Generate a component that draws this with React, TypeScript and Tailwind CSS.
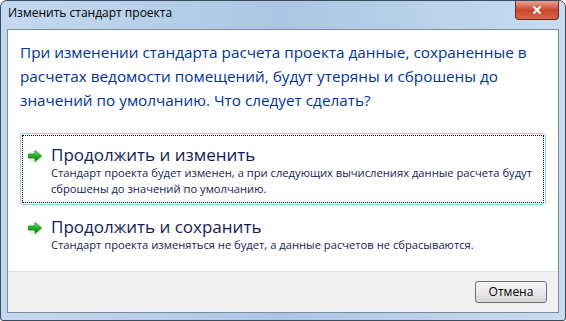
import { X } from "lucide-react"

function GreenArrow() {
  return (
    <svg width="16" height="16" viewBox="0 0 16 16" className="shrink-0">
      <defs>
        <linearGradient id="ga" x1="0" y1="0" x2="0" y2="1">
          <stop offset="0" stopColor="#8be986" />
          <stop offset="0.5" stopColor="#22b11f" />
          <stop offset="1" stopColor="#0b7d12" />
        </linearGradient>
      </defs>
      <ellipse cx="8" cy="8.5" rx="7.5" ry="6" fill="#0a6a10" opacity="0.1" />
      <path d="M1.5 6h6.5V2.5l6.5 5.5-6.5 5.5V10H1.5z" fill="url(#ga)" stroke="#137a1b" strokeWidth="0.7" strokeLinejoin="round" />
    </svg>
  )
}

function Option({ title, text, focused }: { title: string; text: string; focused?: boolean }) {
  return (
    <div
      className={
        focused
          ? "rounded-[3px] border border-[#8fd8f0] p-px"
          : "rounded-[3px] border border-transparent p-px"
      }
    >
      <div
        className={
          focused
            ? "flex gap-[8px] border border-dotted border-black pl-[4px] pr-2 pt-[9px] pb-[5px]"
            : "flex gap-[8px] border border-dotted border-transparent pl-[4px] pr-2 pt-[9px] pb-[5px]"
        }
      >
        <div className="pt-[3px]">
          <GreenArrow />
        </div>
        <div>
          <div className="text-[17px] leading-[20px] text-[#151c55]">{title}</div>
          <div className="text-[11.2px] leading-[16px] text-[#151c55]">{text}</div>
        </div>
      </div>
    </div>
  )
}

export default function App() {
  return (
    <div
      className="flex h-[321px] w-[566px] flex-col overflow-hidden rounded-t-[7px] rounded-b-[3px] border border-[#3b4a5c] bg-gradient-to-r from-[#c4d9ef] via-[#aac6e4] to-[#c8dcf0]"
      style={{ fontFamily: '"Open Sans", "Noto Sans", sans-serif' }}
    >
      <div className="flex h-[28px] shrink-0 items-start justify-between">
        <div className="pl-[7px] pt-[4px] text-[12px] leading-[16px] text-black">Изменить стандарт проекта</div>
        <div className="mr-[6px] flex h-[19px] w-[44px] items-center justify-center rounded-b-[4px] border border-t-0 border-[#6b2a22] bg-gradient-to-b from-[#e8a293] via-[#c9462c] to-[#d9674a]">
          <X className="h-[12px] w-[12px] text-white" strokeWidth={4} />
        </div>
      </div>
      <div className="mx-[6px] mb-[7px] flex flex-1 flex-col border border-[#7c8da1] bg-white">
        <div className="flex flex-1 flex-col px-[12px] pt-[10px]">
          <div className="text-[15.3px] leading-[24px] text-[#003399]">
            При изменении стандарта расчета проекта данные, сохраненные в расчетах ведомости помещений, будут утеряны и сброшены до значений по умолчанию. Что следует сделать?
          </div>
          <div className="mt-[21px] flex flex-col">
            <Option
              focused
              title="Продолжить и изменить"
              text="Стандарт проекта будет изменен, а при следующих вычислениях данные расчета будут сброшены до значений по умолчанию."
            />
            <Option
              title="Продолжить и сохранить"
              text="Стандарт проекта изменяться не будет, а данные расчетов не сбрасываются."
            />
          </div>
        </div>
        <div className="flex h-[41px] shrink-0 items-center justify-end border-t border-[#dfdfdf] bg-[#f0f0f0] pr-[11px]">
          <button className="h-[22px] w-[72px] rounded-[3px] border border-[#707070] bg-gradient-to-b from-[#f2f2f2] via-[#ebebeb] to-[#d6d6d6] text-[12px] text-black">
            Отмена
          </button>
        </div>
      </div>
    </div>
  )
}
